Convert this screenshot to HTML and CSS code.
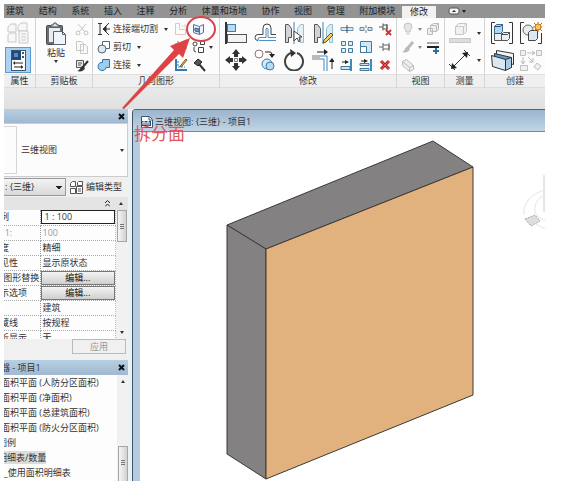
FILE: index.html
```html
<!DOCTYPE html>
<html lang="zh-CN">
<head>
    <meta charset="UTF-8">
    <meta name="viewport" content="width=device-width, initial-scale=1.0">
    <title>三维视图: {三维} - 项目1</title>
    <link rel="stylesheet" href="styles.css">
</head>
<body>
<div class="app">
    <nav class="tabs">
        <div class="links">
            <a href="#">建筑</a>
            <a href="#">结构</a>
            <a href="#">系统</a>
            <a href="#">插入</a>
            <a href="#">注释</a>
            <a href="#">分析</a>
            <a href="#">体量和场地</a>
            <a href="#">协作</a>
            <a href="#">视图</a>
            <a href="#">管理</a>
            <a href="#">附加模块</a>
            <a href="#" class="active">修改</a>
        </div>
        <button class="toggle" aria-label="最小化">
            <svg width="19" height="8" viewBox="0 0 19 8"><rect x="1" y="1" width="10" height="6" rx="2" fill="#f4f4f4" stroke="#555"/><path d="M4 5h4l-2-2z" fill="#222"/><path d="M14 3h4l-2 3z" fill="#222"/></svg>
        </button>
    </nav>

    <div class="ribbon">
        <section class="panel props">
            <div class="tools">
                <button class="sel-off" aria-label="类型属性">
                    <svg width="22" height="22" viewBox="0 0 22 22" fill="#f7f7f7" stroke="#c9c9c9"><path d="M1 5l3-3h5v8H1zM11 4l3-3h6v8h-9zM1 13l2-2h6v9H1z"/><path d="M12 9h9v12h-9z"/><path d="M14 12h5M14 15h5M14 18h5"/></svg>
                </button>
                <button class="sel-on" aria-label="属性">
                    <svg width="22" height="22" viewBox="0 0 22 22"><rect x="4.500" y="1.500" width="14" height="20" fill="#fff" stroke="#43556a"/><path d="M5 2h9v9H5z" fill="#1f4a7c"/><path d="M7 4h4v4H7z" fill="#5c8cbb"/><path d="M15 3h2v2h-2zM15 7h2v2h-2z" fill="#456"/><path d="M7 14h9M7 18h9" stroke="#222"/><path d="M8 12l-2 2 2 2zM14 16l2 2-2 2z" fill="#222"/></svg>
                </button>
            </div>
            <h2>属性</h2>
        </section>

        <section class="panel clip">
            <div class="tools">
                <button class="paste">
                    <svg width="22" height="24" viewBox="0 0 22 24"><rect x="1.500" y="3.500" width="16" height="19" rx="1" fill="#6c7075" stroke="#44484c"/><path d="M4 6h11v14H4z" fill="#e9edf1"/><path d="M6 5V3h2l1-2h2l1 2h2v2z" fill="#d9dde1" stroke="#4a4e52"/><path d="M8.500 9.500h9l3 3v10h-12z" fill="#eef4fa" stroke="#55626f"/><path d="M17.500 9.500v3h3" fill="none" stroke="#55626f"/></svg>
                    <span>粘贴</span>
                    <i class="caret"></i>
                </button>
                <div class="small one">
                    <button aria-label="剪切"><svg width="14" height="14" viewBox="0 0 14 14" stroke="#c4c4c4" fill="none"><path d="M3 2l7 8M11 2L4 10"/><circle cx="3" cy="11" r="2"/><circle cx="11" cy="11" r="2"/></svg></button>
                    <button aria-label="复制"><svg width="14" height="14" viewBox="0 0 14 14" stroke="#c8c8c8" fill="#f8f8f8"><path d="M1.500 1.500h5l2 2v7h-7zM5.500 4.500h5l2 2v7h-7z"/></svg></button>
                    <button aria-label="匹配类型"><svg width="14" height="14" viewBox="0 0 14 14"><path d="M1.500 2.500h7v7h-7zM3 5h4M3 7h3" fill="#e9e9e9" stroke="#555"/><path d="M13 3L7 10" stroke="#333" stroke-width="2"/><path d="M8 8c-3 0-2 4-6 5 4 1 7 0 8-3z" fill="#333"/></svg></button>
                </div>
            </div>
            <h2>剪贴板</h2>
        </section>

        <section class="panel geom">
            <div class="tools">
                <div class="labelled">
                    <button><svg width="14" height="14" viewBox="0 0 14 14" fill="none" stroke="#333"><path d="M1 1.500h4M1 12.500h4M3 2v10M7 7h6M12 1L7 6v2l5 5"/><path d="M6 7l3-3v6z" fill="#333"/></svg><span>连接端切割</span><i class="caret"></i></button>
                    <button><svg width="14" height="14" viewBox="0 0 14 14" stroke="#567"><path d="M5.500 1.500h7v7h-7z" fill="#fff"/><circle cx="5" cy="9" r="4" fill="#dbe9f5"/></svg><span>剪切</span><i class="caret"></i></button>
                    <button><svg width="14" height="14" viewBox="0 0 14 14"><path d="M5.500 1.500h7v8H9a4 4 0 1 1-3.500-5z" fill="#9cccf0" stroke="#2f74ad"/></svg><span>连接</span><i class="caret"></i></button>
                </div>
                <div class="small one">
                    <button aria-label="连接屋顶"><svg width="14" height="14" viewBox="0 0 14 14" fill="none"><path d="M1.500 1.500h4v6h6v5h-10z" stroke="#e6c3c4"/><path d="M7 4h5M10 2l2 2-2 2" stroke="#ddd"/></svg></button>
                    <button aria-label="墙连接"><svg width="14" height="14" viewBox="0 0 14 14"><path d="M1 4h12M1 8h12M4 1v12M9 1v12" stroke="#b66" fill="none"/><path d="M5 5h4v3H5z" fill="#c44"/></svg></button>
                    <button aria-label="梁柱连接"><svg width="14" height="14" viewBox="0 0 14 14"><path d="M2 1v11h11" fill="none" stroke="#3779b5" stroke-width="2"/><path d="M4 3v6h7" fill="none" stroke="#3779b5" stroke-dasharray="2 1"/><path d="M12 1L7 7l-1 2 2-1 5-6z" fill="#efc545" stroke="#776022"/></svg></button>
                </div>
                <div class="small one">
                    <button aria-label="拆分面"><svg width="14" height="14" viewBox="0 0 14 14"><path d="M1.500 2.500l6 2 4-2v8l-4 2-6-2z" fill="#edf3fa" stroke="#52749b"/><path d="M3 6l4 1v3l-4-1z" fill="#7aa1cc" stroke="#375f90"/><path d="M7.500 4.500v8" stroke="#52749b"/></svg></button>
                    <button class="with-caret" aria-label="填色"><svg width="14" height="14" viewBox="0 0 14 14" fill="#fff" stroke="#444"><circle cx="3" cy="4" r="2"/><path d="M8.500 1.500h4v3h-4zM6.500 7.500h5v5h-5zM2 7v4l2 1" /></svg><i class="caret"></i></button>
                    <button aria-label="拆除"><svg width="14" height="14" viewBox="0 0 14 14"><path d="M2 5l4-4 4 3-4 4z" fill="#555" stroke="#222"/><path d="M7 6l6 7" stroke="#333" stroke-width="2"/></svg></button>
                </div>
            </div>
            <h2>几何图形</h2>
        </section>

        <section class="panel modify">
            <div class="tools">
                <div class="big four">
                    <button aria-label="对齐"><svg width="22" height="22" viewBox="0 0 22 22"><path d="M1 0v22" stroke="#333" stroke-width="2"/><rect x="2.500" y="2.500" width="8" height="7" fill="#b6dcf5" stroke="#3f7ca9"/><rect x="2.500" y="12.500" width="19" height="8" fill="#f3f3f3" stroke="#555"/></svg></button>
                    <button aria-label="偏移"><svg width="22" height="22" viewBox="0 0 22 22" fill="none"><path d="M22 12.500h-5V6q0-4-4-4T9 6v6.500H4q-3 0-3 3t3 3" stroke="#444"/><path d="M22 15.500h-8V7q-1-2-2 0v8.500H6q-2 0-2 1.500t2 1.500h16" stroke="#4b91c7"/></svg></button>
                    <button aria-label="镜像 - 拾取轴"><svg width="22" height="22" viewBox="0 0 22 22"><path d="M2.500 2.500h3l3 4v9h-3v5h-3z" fill="#d4d4d4" stroke="#555"/><path d="M11 0v22" stroke="#3683c0"/><path d="M20.500 2.500h-3l-3 4v9h3v5h3z" fill="#e3f0f6" stroke="#a7bac5"/><path d="M11 9v10l3-3 2 4 1-1-1-4h3z" fill="#fff" stroke="#444"/></svg></button>
                    <button aria-label="镜像 - 绘制轴"><svg width="22" height="22" viewBox="0 0 22 22"><path d="M2.500 2.500h3l3 4v9h-3v5h-3z" fill="#d4d4d4" stroke="#555"/><path d="M11 0v22" stroke="#3683c0"/><path d="M20.500 2.500h-3l-3 4v9h3v5h3z" fill="#d2edf5" stroke="#96bbc9"/><path d="M19 11l2 2-7 7-3 1 1-3z" fill="#f6cf58" stroke="#665321"/></svg></button>
                    <button aria-label="移动"><svg width="22" height="22" viewBox="0 0 22 22" fill="#333"><path d="M11 0l4 5h-2v3H9V5H7zM11 22l4-5h-2v-3H9v3H7zM0 11l5-4v2h3v4H5v2zM22 11l-5-4v2h-3v4h3v2z"/><path d="M9.500 9.500h3v3h-3z" fill="#fff" stroke="#777"/></svg></button>
                    <button aria-label="复制图元"><svg width="22" height="22" viewBox="0 0 22 22"><circle cx="5" cy="5" r="4" fill="#fff" stroke="#98727b"/><path d="M11 3h5q2 0 2 3" fill="none" stroke="#222"/><path d="M15 5h6l-3 4z" fill="#222"/><circle cx="13" cy="15" r="5" fill="#d4e9f7" stroke="#3c7baa"/><circle cx="16" cy="17" r="4" fill="#b4dcf5" stroke="#3c7baa"/></svg></button>
                    <button aria-label="旋转"><svg width="22" height="22" viewBox="0 0 22 22"><path d="M14 4a9 9 0 1 1-6 0" fill="none" stroke="#444" stroke-width="2"/><path d="M7 0l6 4-5 4z" fill="#333"/></svg></button>
                    <button aria-label="修剪"><svg width="22" height="22" viewBox="0 0 22 22" fill="none"><path d="M0 7h15v15M0 10h12v12" stroke="#398bc5"/><path d="M0 7h8v3H0z" fill="#bbb"/><path d="M5 3h8M20 20v-8" stroke="#222"/><path d="M12 0l4 3-4 3zM17 13l3-4 3 4z" fill="#222"/></svg></button>
                </div>
                <div class="small three">
                    <button aria-label="拆分图元"><svg width="14" height="14" viewBox="0 0 14 14"><path d="M1 5.500h12v3H1z" fill="#d8e8f3" stroke="#6b93b3"/><path d="M7 3v8" stroke="#444"/></svg></button>
                    <button aria-label="用间隙拆分"><svg width="14" height="14" viewBox="0 0 14 14" fill="#d8e8f3" stroke="#6b8497"><path d="M1 5.500h4v3H1zM9 5.500h4v3H9zM7 3v3M7 8v3"/></svg></button>
                    <button aria-label="解锁"><svg width="14" height="14" viewBox="0 0 14 14" fill="none"><path d="M1 5h4M5 1.500v7M5 3h4v4H5M9 2v6" stroke="#555"/><path d="M8 8l5 5M13 8l-5 5" stroke="#d32f35" stroke-width="2"/></svg></button>
                    <button aria-label="阵列"><svg width="14" height="14" viewBox="0 0 14 14" fill="#dceefa" stroke="#46799e"><path d="M1.500 1.500h4v4h-4zM8.500 1.500h4v4h-4zM1.500 8.500h4v4h-4zM8.500 8.500h4v4h-4z"/></svg></button>
                    <button aria-label="缩放"><svg width="14" height="14" viewBox="0 0 14 14" fill="#cee8f8" stroke="#46799e"><path d="M1.500 1.500h11v11h-11z"/><path d="M1.500 6.500h6v6h-6z" fill="#fff"/></svg></button>
                    <button aria-label="锁定"><svg width="14" height="14" viewBox="0 0 14 14" fill="none" stroke="#666"><path d="M1 7h4M5 3v8M5 5h6v4H5M11 3v8"/></svg></button>
                    <button aria-label="修剪单个"><svg width="14" height="14" viewBox="0 0 14 14"><path d="M11 1v12" stroke="#398bc5" stroke-width="2"/><path d="M1 8.500h9v3H1z" fill="#cce5f5" stroke="#467998"/><path d="M2 4h3" stroke="#222"/><path d="M5 2l4 2-4 2z" fill="#222"/></svg></button>
                    <button aria-label="修剪多个"><svg width="14" height="14" viewBox="0 0 14 14"><path d="M12 1v12" stroke="#398bc5" stroke-width="2"/><path d="M1 5.500h9v2H1zM1 10.500h9v2H1z" fill="#cce5f5" stroke="#467998"/><path d="M2 3h3" stroke="#222"/><path d="M5 1l4 2-4 2z" fill="#222"/></svg></button>
                    <button aria-label="删除"><svg width="14" height="14" viewBox="0 0 14 14"><path d="M3 3l8 8M11 3l-8 8" stroke="#b92329" stroke-width="3"/><path d="M3 3l8 8M11 3l-8 8" stroke="#e45658"/></svg></button>
                </div>
            </div>
            <h2>修改</h2>
        </section>

        <section class="panel view">
            <div class="tools">
                <div class="small two">
                    <button class="with-caret" aria-label="隐藏"><svg width="14" height="14" viewBox="0 0 14 14" fill="#e4e4e4" stroke="#c4c4c4"><path d="M5 10C5 8 3 7 3 5a4 4 0 0 1 8 0c0 2-2 3-2 5zM5 12h4"/></svg><i class="caret pale"></i></button>
                    <button aria-label="置换"><svg width="14" height="14" viewBox="0 0 14 14" fill="#eee" stroke="#bbb"><path d="M4.500 3.500l3-2h5v6l-2 2h-6zM1.500 6.500h5v6h-5zM4.500 3.500h6l2-2M10.500 4v5"/></svg></button>
                    <button class="with-caret" aria-label="替换"><svg width="14" height="14" viewBox="0 0 14 14"><path d="M12 2L6 9" stroke="#bbb" stroke-width="3"/><path d="M7 7c-4 0-2 3-6 5 4 1 7 0 8-3z" fill="#bbb"/></svg><i class="caret pale"></i></button>
                    <button aria-label="线处理"><svg width="14" height="14" viewBox="0 0 14 14"><path d="M1 3h12" stroke="#555"/><path d="M1 7h12" stroke="#222" stroke-width="2"/><path d="M10 8v6M7 11h6" stroke="#2d6e9f" stroke-width="2"/></svg></button>
                    <button aria-label="选择框"><svg width="14" height="14" viewBox="0 0 14 14" fill="#ededed" stroke="#bbb"><path d="M1.500 3.500l4-2 7 6v4l-4 2-7-6zM1.500 3.500l7 6v4M8.500 9.500l4-2"/></svg></button>
                </div>
            </div>
            <h2>视图</h2>
        </section>

        <section class="panel measure">
            <div class="tools">
                <div class="big one">
                    <button class="with-caret" aria-label="测量"><svg width="22" height="22" viewBox="0 0 22 22" fill="#f1f1f1" stroke="#c7c7c7"><path d="M6.500 4.500l3-3h8v8l-3 3h-8zM6.500 4.500h8l3-3M14.500 5v7"/><path d="M.500 16.500h21v4H.500z" fill="#ddd"/></svg><i class="caret"></i></button>
                    <button class="with-caret" aria-label="尺寸标注"><svg width="22" height="22" viewBox="0 0 22 22" fill="none" stroke="#333"><path d="M3 19L18 4M0 15l6 6M15 1l6 6"/><path d="M2 20l1-6 5 5zM19 3l-6 1 5 5z" fill="#222" stroke="none"/></svg><i class="caret"></i></button>
                </div>
            </div>
            <h2>测量</h2>
        </section>

        <section class="panel create">
            <div class="tools">
                <div class="big pair">
                    <button aria-label="创建组"><svg width="22" height="22" viewBox="0 0 22 22" fill="none"><path d="M4 .500H.500v21H4M18 .500h3.500v21H18" stroke="#333"/><path d="M3.500 4.500l2-2h6v7l-2 2h-6z" fill="#a9d8f2" stroke="#336e95"/><path d="M3.500 11.500h7v7h-7zM10.500 12.500l2-2h6v6l-2 2h-6z" fill="#e8f0f6" stroke="#555"/><path d="M3.500 4.500h6l2-2M10.500 12.500h6l2-2" stroke="#446"/></svg></button>
                    <button aria-label="创建类似实例"><svg width="22" height="22" viewBox="0 0 22 22" fill="none"><path d="M4 .500H.500v21H4M21.500 11v10.500H18" stroke="#333"/><circle cx="8" cy="8" r="5" fill="#e3edf5" stroke="#666"/><path d="M8.500 10.500l2-2h7v8l-2 2h-7z" fill="#dce8f3" stroke="#444"/><path d="M18 0v10M13 5h10M14 1l8 8M22 1l-8 8" stroke="#bd6c16"/><circle cx="18" cy="5" r="3" fill="#ffc74e" stroke="#cf7818"/></svg></button>
                    <button aria-label="创建部件"><svg width="24" height="22" viewBox="0 0 24 22" stroke="#333"><path d="M5.500 1.500l17 3v11l-17-5z" fill="#f3f6f8"/><path d="M3.500 4.500l17 4v10l-17-5z" fill="#5c9ac9"/><path d="M.500 6.500l14 4v11l-13-4z" fill="#dbe8f1"/><path d="M14.500 10.500l6-2v10l-6 3z" fill="#a9cce4"/></svg></button>
                    <button aria-label="创建零件"><svg width="22" height="22" viewBox="0 0 22 22" fill="#f0f0f0" stroke="#bfbfbf"><path d="M.500 1.500h5v5h-5zM16.500 1.500h5v5h-5zM.500 16.500h7v5h-7zM17 14l4 3-3 4-4-3zM7 4h8M12 2l3 2-3 2M3 8v7M1 12l2 3 2-3M8 8l5 5M13 9v4H9"/></svg></button>
                </div>
            </div>
            <h2>创建</h2>
        </section>
    </div>

    <div class="band"></div>

    <main class="work">
        <aside class="side">
            <header class="bar"><span></span><button aria-label="关闭属性"><svg width="7" height="7" viewBox="0 0 7 7"><path d="M1 1l5 5M6 1L1 6" stroke="#111" stroke-width="2"/></svg></button></header>
            <div class="type">
                <div class="thumb"></div>
                <span>三维视图</span>
                <i class="caret"></i>
            </div>
            <div class="picker">
                <select aria-label="视图"><option>: {三维}</option></select>
                <button>
                    <svg width="13" height="13" viewBox="0 0 13 13" fill="#fff" stroke="#555"><path d="M.500 2.500l2-2h3v5h-5zM.500 7.500h5v5h-5zM7.500 1.500l1-1h4v4h-5zM6.500 5.500h6v7h-6zM8 8h3M8 10h3"/></svg>
                    编辑类型
                </button>
            </div>
            <div class="group">
                <svg width="5" height="7" viewBox="0 0 5 7" fill="none" stroke="#222"><path d="M0 3l2.500-2.500L5 3M0 6.500L2.500 4 5 6.500"/></svg>
                <i class="caret up"></i>
            </div>
            <div class="grid-wrap">
                <table>
                    <tr><th><label for="scale">例</label></th><td><input id="scale" type="text" value="1 : 100"></td></tr>
                    <tr class="dim"><th>&nbsp; 1:</th><td>100</td></tr>
                    <tr><th>度</th><td>精细</td></tr>
                    <tr><th>见性</th><td>显示原状态</td></tr>
                    <tr><th>/图形替换</th><td><button class="edit">编辑...</button></td></tr>
                    <tr><th>示选项</th><td><button class="edit">编辑...</button></td></tr>
                    <tr><th></th><td>建筑</td></tr>
                    <tr><th>藏线</th><td>按规程</td></tr>
                    <tr><th>析显示</th><td>无</td></tr>
                </table>
                <div class="scroll">
                    <div class="grip top"></div>
                    <i class="caret"></i>
                </div>
            </div>
            <div class="apply"><button disabled>应用</button></div>
            <header class="bar browser"><span>器 - 项目1</span><button aria-label="关闭浏览器"><svg width="7" height="7" viewBox="0 0 7 7"><path d="M1 1l5 5M6 1L1 6" stroke="#111" stroke-width="2"/></svg></button></header>
            <div class="tree-wrap">
                <ul class="tree">
                    <li>面积平面 (人防分区面积)</li>
                    <li>面积平面 (净面积)</li>
                    <li>面积平面 (总建筑面积)</li>
                    <li>面积平面 (防火分区面积)</li>
                    <li class="root">图例</li>
                    <li class="root"><span class="current">明细表/数量</span></li>
                    <li class="root">A_使用面积明细表</li>
                </ul>
                <div class="scroll">
                    <i class="caret up"></i>
                    <div class="grip bottom"></div>
                </div>
            </div>
        </aside>

        <section class="window">
            <header class="title">
                <svg width="12" height="12" viewBox="0 0 12 12"><path d="M.500.500h8l3 3v8H.500z" fill="#fff" stroke="#3d5876"/><path d="M0 5h10v5H0z" fill="#244d7c"/><path d="M2 9V6h2v3M6 9V6h2v3" stroke="#fff" fill="none"/><path d="M8 1v3h3" stroke="#3d5876" fill="none"/></svg>
                <span>三维视图: {三维} - 项目1</span>
            </header>
            <div class="canvas">
                <svg viewBox="0 0 405 349">
                    <g stroke="#3c3935" stroke-linejoin="round">
                        <path d="M87 93L293 9l40 26-207 82z" fill="#838182"/>
                        <path d="M87 93l39 24v230l-39-25z" fill="#838182"/>
                        <path d="M126 117l207-82v228l-207 84z" fill="#e1b17e"/>
                    </g>
                    <!-- view cube and compass, cut off by the window edge -->
                    <g fill="none" stroke="#e4e4e4">
                        <path d="M404 43v37" stroke="#ccc"/>
                        <path d="M405 58c-14 4-22 13-21 25M405 63c-8 3-11 10-10 16 1 5 5 8 10 9M394 91l11 6"/>
                        <path d="M385 87l10-4 5 6-9 5z" fill="#ddd" stroke="#aaa" stroke-dasharray="2 1"/>
                    </g>
                </svg>
            </div>
        </section>
    </main>

    <svg class="mark" width="100" height="96" viewBox="0 0 100 96">
        <ellipse cx="80" cy="16" rx="14" ry="12" fill="none" stroke="#d9434b" stroke-width="2"/>
        <path d="M1 95L53 37l-4-4 20-8-7 20-4-4L3 96z" fill="#dd4345"/>
    </svg>
    <div class="note">拆分面</div>
</div>
</body>
</html>
```
FILE: styles.css
```css
* {
    box-sizing: border-box;
}
body {
    margin: 4px 29px 19px 4px;
    background: #fff;
    color: #333;
    font: 9px/14px "Open Sans", "Noto Sans CJK SC", sans-serif;
}
button, select, input {
    font: inherit;
    color: inherit;
    margin: 0;
    padding: 0;
    border: 0;
    background: none;
}
svg {
    display: block;
    flex: none;
}
.app {
    position: relative;
    overflow: hidden;
}
.caret {
    flex: none;
    width: 0;
    border: 2px solid transparent;
    border-top: 3px solid #333;
    border-bottom: 0;
}
.caret.up {
    border-top: 0;
    border-bottom: 3px solid #333;
}
.caret.pale {
    border-top-color: #888;
}

/* ribbon tabs */
.tabs {
    display: flex;
    align-items: center;
    height: 14px;
    padding-left: 2px;
    background: #939393;
}
.links {
    display: flex;
    align-items: flex-end;
    justify-content: space-between;
    width: 422px;
    height: 14px;
}
.tabs a {
    color: #222;
    text-decoration: none;
    white-space: nowrap;
}
.tabs .active {
    margin: 0 -8px;
    padding: 0 8px;
    line-height: 12px;
    background: #f1f1f1;
}
.toggle {
    margin-left: 20px;
}

/* ribbon panels */
.ribbon {
    display: flex;
    background: #fcfcfc;
}
.panel {
    display: flex;
    flex-direction: column;
    flex: none;
    border-right: 1px solid #d4d4d4;
}
.panel h2 {
    margin: 0;
    height: 14px;
    font-size: 9px;
    font-weight: normal;
    text-align: center;
    background: #efefef;
    border-top: 1px solid #e0e0e0;
    border-bottom: 1px solid #ddd;
    line-height: 12px;
}
.tools {
    display: flex;
    height: 56px;
    padding-top: 4px;
}
.props {
    width: 32px;
}
.props .tools {
    flex-direction: column;
    padding: 3px 4px 0 1px;
    gap: 2px;
}
.props button {
    display: flex;
    justify-content: center;
    align-items: center;
    height: 24px;
}
.props .sel-on {
    background: #a9d2f3;
    border: 1px solid #5c9bd0;
    height: 26px;
}
.clip {
    width: 57px;
}
.clip .tools {
    padding-left: 9px;
    gap: 8px;
}
.paste {
    display: flex;
    flex-direction: column;
    align-items: center;
    width: 22px;
    height: 46px;
}
.small, .big {
    display: grid;
    align-content: start;
}
.small {
    grid-auto-rows: 14px;
    row-gap: 4px;
    column-gap: 5px;
}
.big {
    grid-auto-rows: 22px;
    row-gap: 5px;
    column-gap: 7px;
}
.three {
    grid-template-columns: repeat(3, 14px);
}
.two {
    grid-template-columns: 20px 14px;
}
.four {
    grid-template-columns: repeat(4, 22px);
}
.pair {
    grid-template-columns: 22px 22px;
}
.with-caret {
    display: flex;
    align-items: center;
    gap: 3px;
}
.geom {
    width: 127px;
}
.geom .tools {
    padding-left: 4px;
    gap: 4px;
}
.labelled {
    display: flex;
    flex-direction: column;
    gap: 4px;
    width: 73px;
}
.labelled button {
    display: flex;
    align-items: center;
    height: 14px;
    gap: 2px;
    white-space: nowrap;
}
.labelled .caret {
    margin-left: 4px;
}
.modify {
    width: 177px;
}
.modify .tools {
    padding-left: 5px;
    gap: 6px;
}
.view {
    width: 48px;
}
.view .tools {
    padding-left: 4px;
}
.measure {
    width: 40px;
}
.measure .tools {
    padding-left: 4px;
}
.measure .with-caret {
    gap: 6px;
}
.create {
    flex: 1;
    border-right: 0;
}
.create .tools {
    padding-left: 6px;
}
.band {
    height: 21px;
    background: linear-gradient(#e9e9e9, #e0e0e0);
}

/* palettes on the left */
.work {
    display: flex;
    background: #edf0f4;
}
.side {
    width: 124px;
    flex: none;
    margin-right: 4px;
    overflow: hidden;
    background: #f0f0f0;
}
.bar {
    display: flex;
    align-items: center;
    justify-content: space-between;
    height: 14px;
    padding-right: 3px;
    background: linear-gradient(#b8cfe2, #9fb9d0);
}
.bar.browser {
    height: 15px;
}
.bar span {
    text-indent: -3px;
}
.type {
    display: flex;
    align-items: center;
    height: 54px;
    padding-right: 3px;
    background: #fcfcfc;
    border: 1px solid #ccc;
    border-left: 0;
}
.type .thumb {
    width: 13px;
    height: 48px;
    margin-right: 4px;
    border: 1px solid #d5d5d5;
    border-left: 0;
}
.type .caret {
    margin-left: auto;
}
.picker {
    display: flex;
    align-items: center;
    gap: 4px;
    height: 20px;
}
.picker select {
    width: 62px;
    height: 18px;
    padding-left: 1px;
    appearance: none;
    border: 1px solid #999;
    border-left: 0;
    background: linear-gradient(45deg, transparent 50%, #222 50%) 52px 7px / 3px 3px no-repeat,
                linear-gradient(-45deg, transparent 50%, #222 50%) 55px 7px / 3px 3px no-repeat,
                linear-gradient(#f3f3f3, #d9d9d9);
}
.picker button {
    display: flex;
    align-items: center;
    gap: 3px;
    white-space: nowrap;
}
.group {
    display: flex;
    align-items: center;
    justify-content: flex-end;
    gap: 9px;
    height: 13px;
    padding-right: 5px;
    background: #e4e4e4;
}
.grid-wrap {
    display: flex;
    height: 129px;
    overflow: hidden;
    background: #fdfdfd;
}
.grid-wrap table {
    width: 112px;
    flex: none;
    border-collapse: collapse;
    table-layout: fixed;
}
.grid-wrap tr {
    height: 15px;
}
.grid-wrap th, .grid-wrap td {
    height: 15px;
    padding: 0;
    font-weight: normal;
    line-height: 14px;
    white-space: nowrap;
    border-bottom: 1px dotted #aaa;
}
.grid-wrap th {
    width: 36px;
    text-align: left;
    text-indent: -4px;
    overflow: hidden;
    border-right: 1px dotted #999;
}
.grid-wrap td {
    padding-left: 2px;
    border-right: 1px dotted #bbb;
}
.grid-wrap td:has(input), .grid-wrap td:has(button) {
    padding: 0;
}
.grid-wrap input {
    display: block;
    width: 100%;
    height: 14px;
    padding-left: 3px;
    border: 1px solid #222;
    background: #fff;
}
.edit {
    display: block;
    width: 100%;
    height: 14px;
    line-height: 12px;
    color: #111;
    background: linear-gradient(#f4f4f4, #cfcfcf);
    border: 1px solid #777;
}
.grid-wrap .dim {
    color: #999;
}
.scroll {
    display: flex;
    flex-direction: column;
    align-items: center;
    flex: 1;
    background: #f1f1f1;
}
.scroll > .caret {
    margin: 5px 0;
}
.grip {
    width: 10px;
    border: 1px solid #a5a5a5;
    background: linear-gradient(#777, #777) center 13px / 4px 1px no-repeat,
                linear-gradient(#777, #777) center 15px / 4px 1px no-repeat,
                linear-gradient(#777, #777) center 17px / 4px 1px no-repeat,
                linear-gradient(90deg, #f5f5f5, #d2d2d2);
}
.grip.top {
    height: 32px;
    margin-bottom: auto;
}
.grip.bottom {
    height: 35px;
    margin-top: auto;
    border-bottom: 0;
}
.apply {
    display: flex;
    justify-content: flex-end;
    height: 21px;
    padding-right: 2px;
}
.apply button {
    width: 54px;
    height: 15px;
    color: #999;
    border: 1px solid #bbb;
    line-height: 12px;
}
.tree-wrap {
    display: flex;
    height: 106px;
    background: #fdfdfd;
}
.tree {
    width: 113px;
    margin: 0;
    padding: 0;
    list-style: none;
    overflow: hidden;
}
.tree li {
    height: 15px;
    line-height: 15px;
    white-space: nowrap;
    text-indent: -3px;
}
.tree .root {
    text-indent: -6px;
}
.tree .current {
    background: #dcdcdc;
}

/* drawing window */
.window {
    flex: 1;
    min-width: 0;
    border-left: 1px solid #3f5568;
    background: #b4cbe0;
    padding-left: 7px;
    border-top: 1px solid #52677a;
    border-top-left-radius: 4px;
}
.title {
    display: flex;
    align-items: center;
    gap: 2px;
    height: 22px;
    margin-left: -7px;
    padding: 3px 0 0 8px;
    background: linear-gradient(#9bb5cd, #c0d4e6);
    border-bottom: 1px solid #71899d;
    border-top-left-radius: 3px;
}
.canvas {
    background: #fff;
}
.canvas svg {
    width: 100%;
    height: auto;
}

/* red markup over the drawing */
.mark {
    position: absolute;
    left: 117px;
    top: 9px;
}
.note {
    position: absolute;
    left: 130px;
    top: 120px;
    font-size: 17px;
    line-height: 20px;
    color: #e2555b;
}
```
